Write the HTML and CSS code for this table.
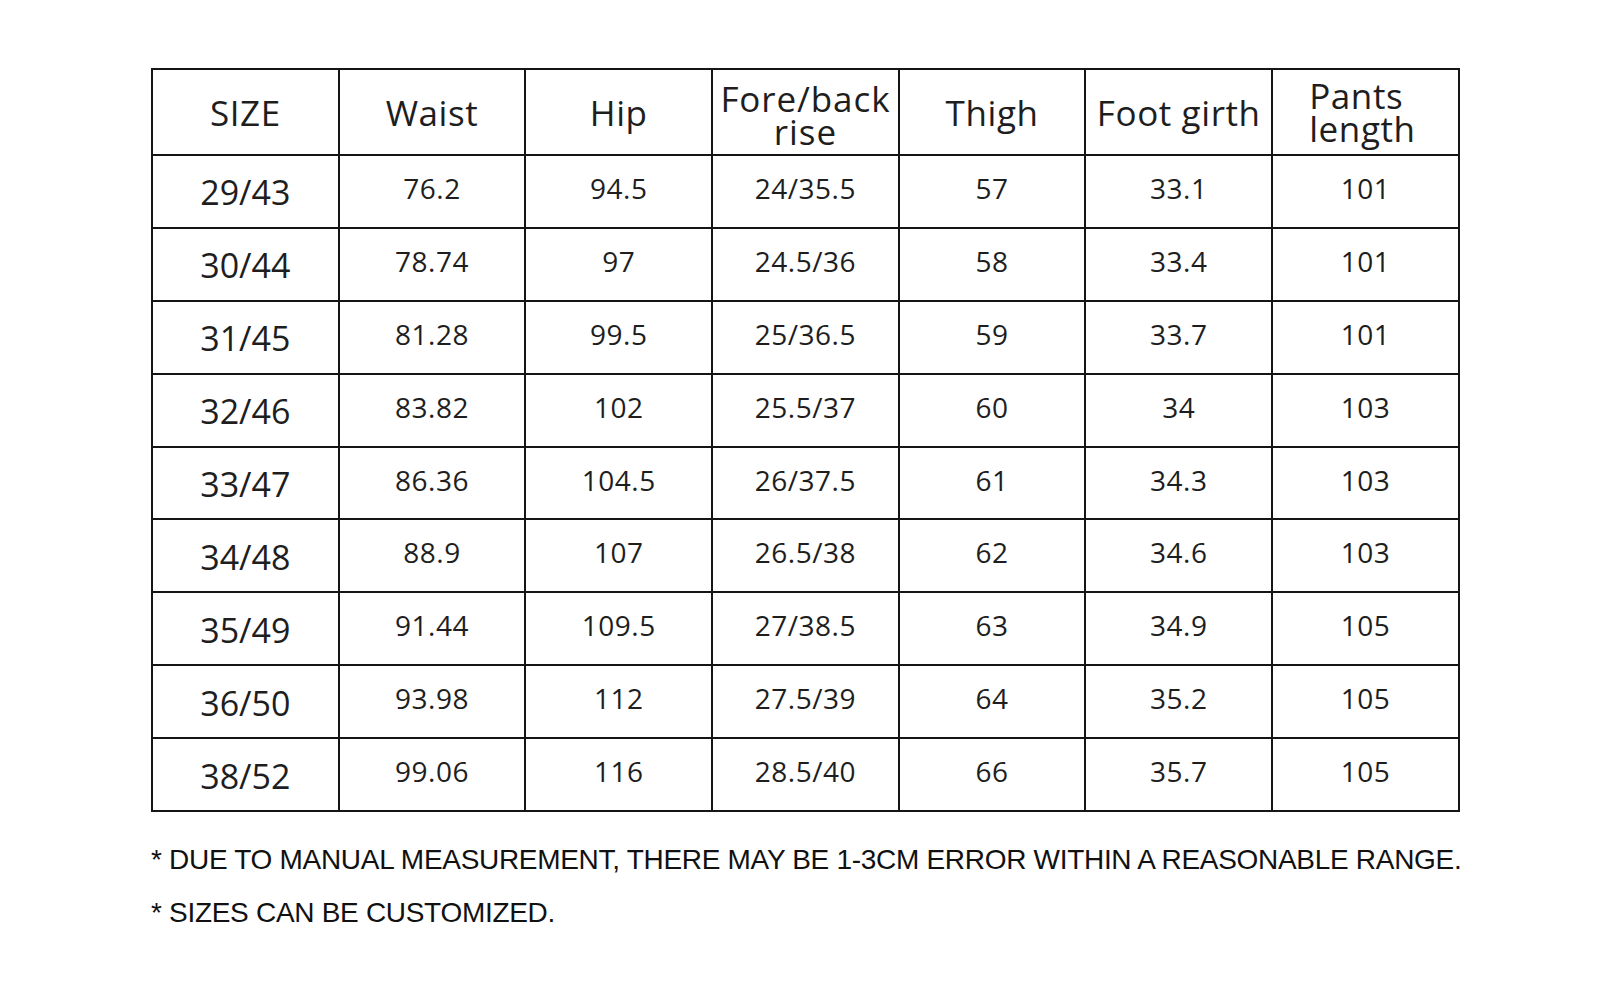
FILE: index.html
```html
<!DOCTYPE html>
<html>
<head>
<meta charset="utf-8">
<title>Size chart</title>
<link rel="stylesheet" href="styles.css">
</head>
<body>
<div class="sheet">
  <table class="size-table">
    <colgroup>
      <col class="c"><col class="c"><col class="c"><col class="c"><col class="c"><col class="c"><col class="c">
    </colgroup>
    <thead>
      <tr class="head">
        <th class="h1">SIZE</th>
        <th class="h1 waist">Waist</th>
        <th class="h1 hip">Hip</th>
        <th class="h2 fore">Fore/back<br>rise</th>
        <th class="h1 thigh">Thigh</th>
        <th class="h1">Foot girth</th>
        <th class="h2 pants">Pants<br>length</th>
      </tr>
    </thead>
    <tbody>
      <tr><td class="sz">29/43</td><td>76.2</td><td>94.5</td><td>24/35.5</td><td>57</td><td>33.1</td><td>101</td></tr>
      <tr><td class="sz">30/44</td><td>78.74</td><td>97</td><td>24.5/36</td><td>58</td><td>33.4</td><td>101</td></tr>
      <tr><td class="sz">31/45</td><td>81.28</td><td>99.5</td><td>25/36.5</td><td>59</td><td>33.7</td><td>101</td></tr>
      <tr><td class="sz">32/46</td><td>83.82</td><td>102</td><td>25.5/37</td><td>60</td><td>34</td><td>103</td></tr>
      <tr><td class="sz">33/47</td><td>86.36</td><td>104.5</td><td>26/37.5</td><td>61</td><td>34.3</td><td>103</td></tr>
      <tr><td class="sz">34/48</td><td>88.9</td><td>107</td><td>26.5/38</td><td>62</td><td>34.6</td><td>103</td></tr>
      <tr><td class="sz">35/49</td><td>91.44</td><td>109.5</td><td>27/38.5</td><td>63</td><td>34.9</td><td>105</td></tr>
      <tr><td class="sz">36/50</td><td>93.98</td><td>112</td><td>27.5/39</td><td>64</td><td>35.2</td><td>105</td></tr>
      <tr><td class="sz">38/52</td><td>99.06</td><td>116</td><td>28.5/40</td><td>66</td><td>35.7</td><td>105</td></tr>
    </tbody>
  </table>
  <div class="notes">
    <p class="note">* DUE TO MANUAL MEASUREMENT, THERE MAY BE 1-3CM ERROR WITHIN A REASONABLE RANGE.</p>
    <p class="note">* SIZES CAN BE CUSTOMIZED.</p>
  </div>
</div>
</body>
</html>
```

FILE: styles.css
```css
html, body {
  margin: 0;
  padding: 0;
  background: #ffffff;
}

.sheet {
  padding: 68px 0 0 151px;
}

.size-table {
  border-collapse: collapse;
  table-layout: fixed;
  width: 1307px;
  font-family: "Open Sans", "Noto Sans", sans-serif;
  color: #1e1e1e;
}

.size-table .c {
  width: 186.7px;
}

.size-table th,
.size-table td {
  border: 2px solid #151515;
  text-align: center;
  padding: 0;
  font-weight: 400;
}

.head {
  height: 86px;
}

.h1 {
  font-size: 35px;
  letter-spacing: 0.6px;
  padding-top: 4px;
}

.h2 {
  font-size: 35px;
  line-height: 33px;
  letter-spacing: 0.6px;
  padding-bottom: 2px;
}

.h2.fore {
  padding-top: 5px;
  padding-bottom: 0;
  letter-spacing: 0.9px;
}

.size-table th.pants {
  text-align: left;
  padding-left: 36px;
}

.size-table tbody tr {
  height: 72.9px;
}

.size-table td {
  font-size: 28px;
  letter-spacing: 0.5px;
  padding-bottom: 7px;
}

.size-table td.sz {
  font-size: 34px;
  letter-spacing: 0;
  padding-top: 2px;
  padding-bottom: 0;
}

.notes {
  font-family: "Liberation Sans", Arial, sans-serif;
  color: #111111;
  font-size: 28px;
  margin-top: 21px;
}

.note {
  margin: 0;
  line-height: 53px;
  letter-spacing: -0.3px;
}
```
